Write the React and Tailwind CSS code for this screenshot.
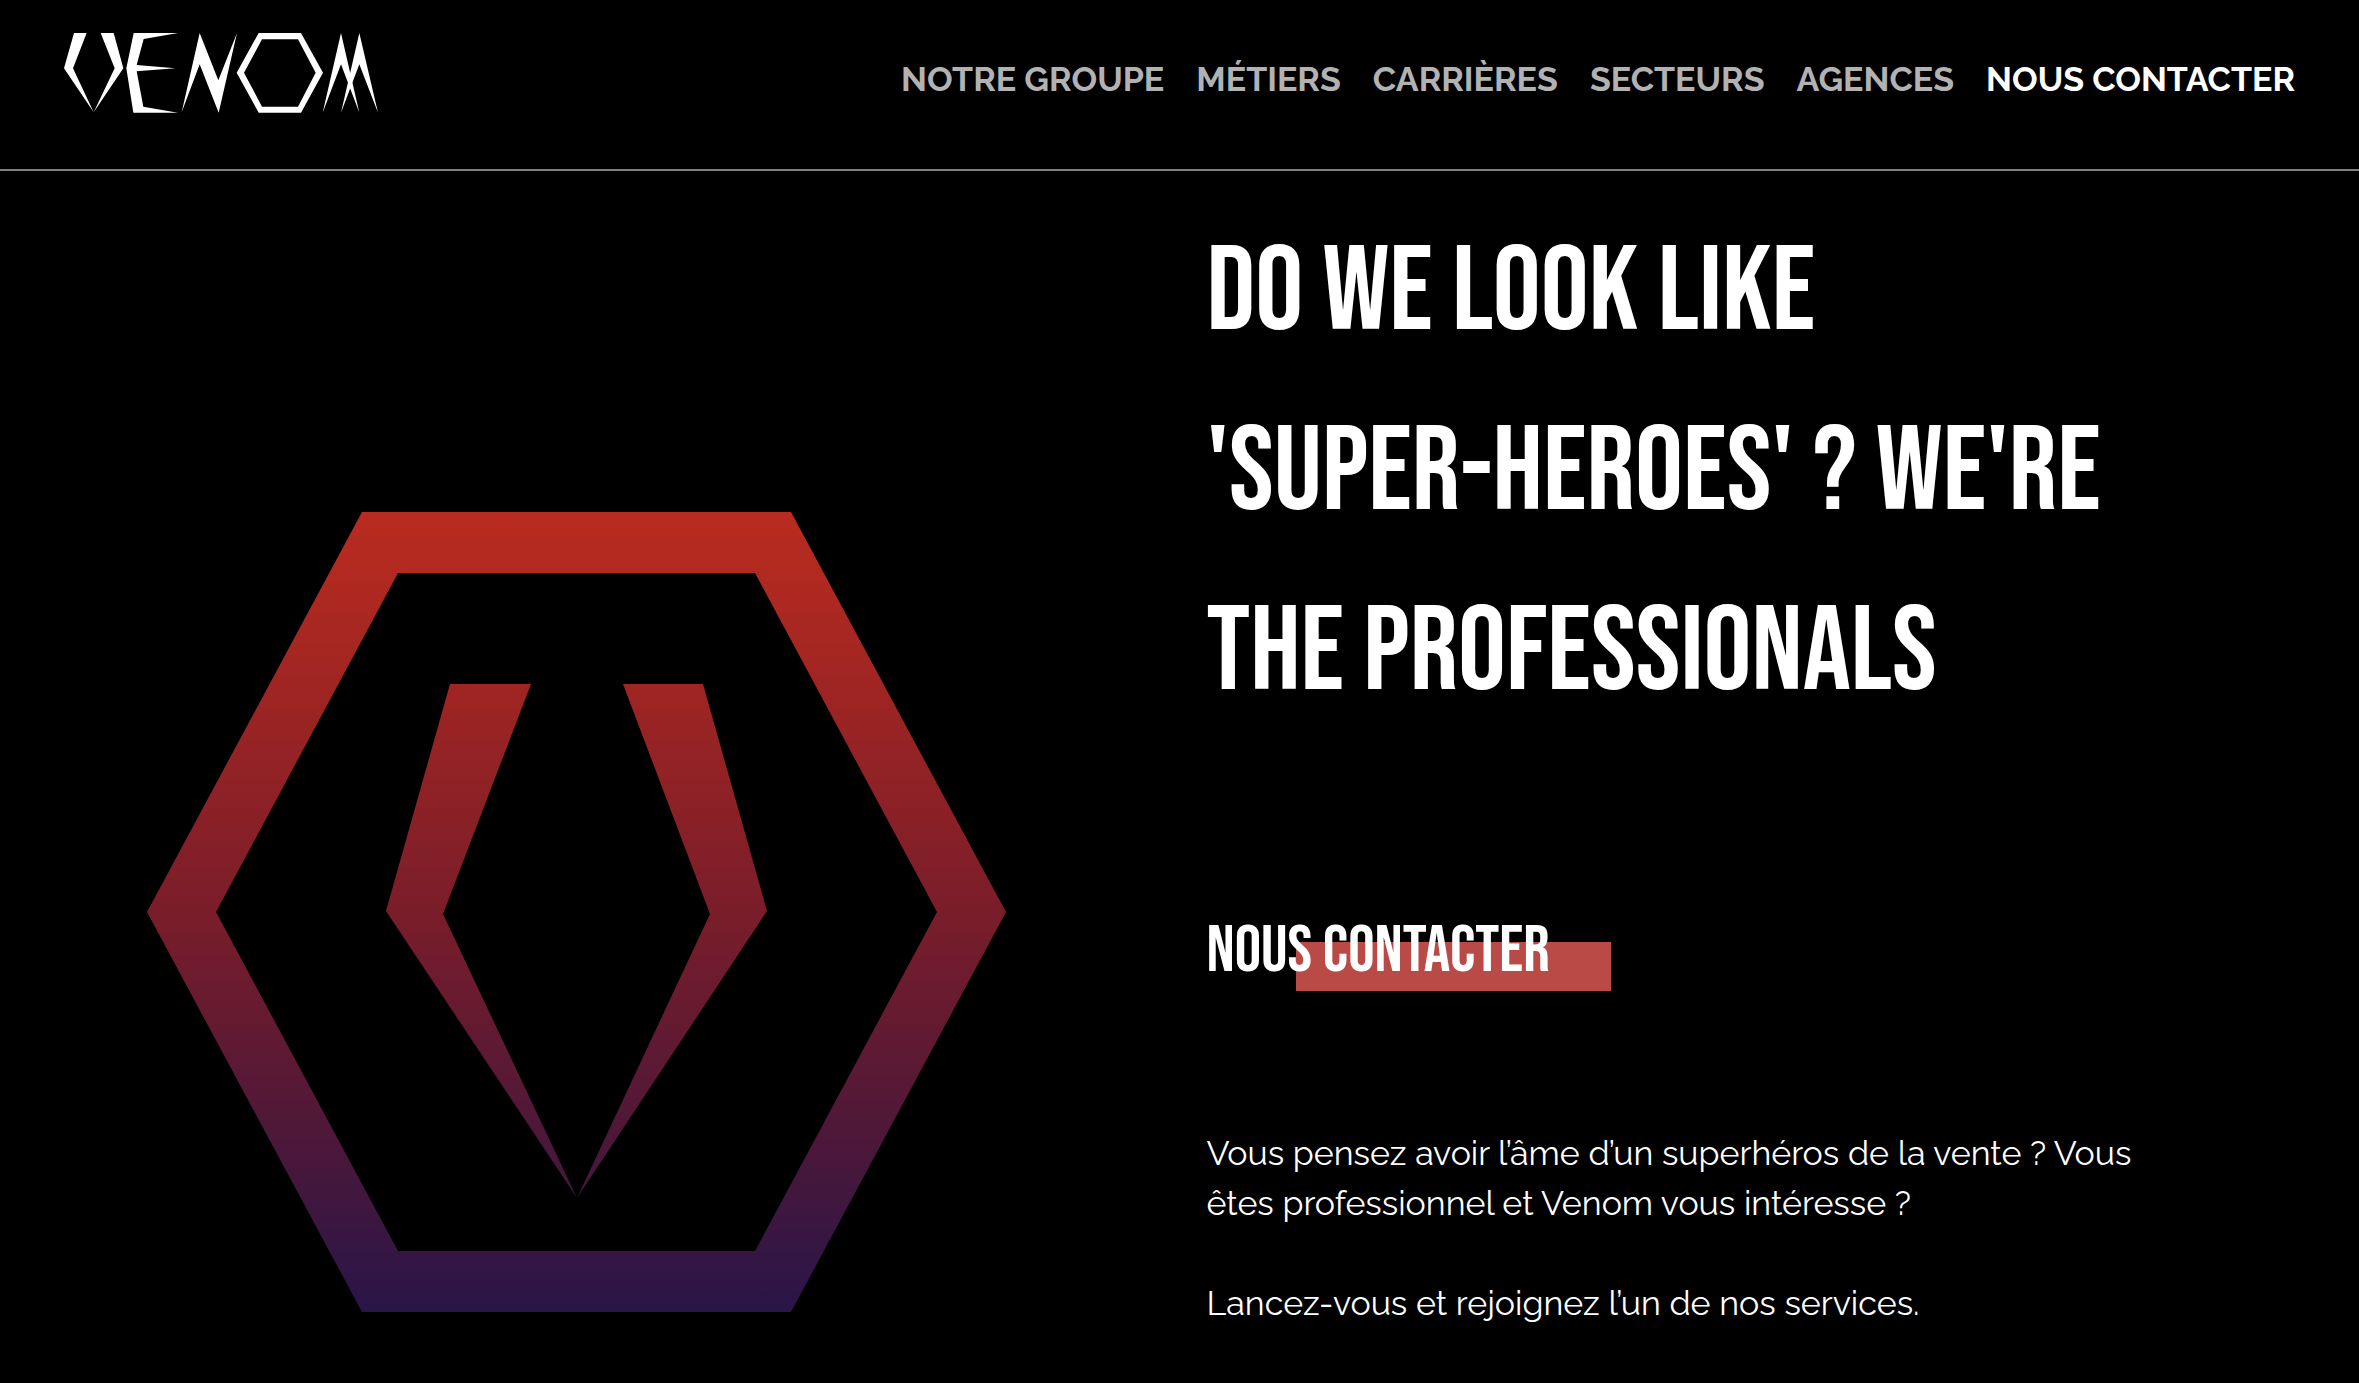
const LINKS = [
  { label: "NOTRE GROUPE", href: "#groupe" },
  { label: "MÉTIERS", href: "#metiers" },
  { label: "CARRIÈRES", href: "#carrieres" },
  { label: "SECTEURS", href: "#secteurs" },
  { label: "AGENCES", href: "#agences" },
  { label: "NOUS CONTACTER", href: "#contact", active: true },
];

function LogoVenom({ className = "" }) {
  return (
    <svg className={className} viewBox="0 0 942 240" fill="currentColor" role="img" aria-label="Venom">
      <polygon points="30,0 68,0 27,106 89,238 0,106" />
      <polygon points="110,0 149,0 178,106 89,238 152,106" />
      <polygon points="209,0 342,0 239,18 218,96 334,106 218,115 238,221 342,239 208,239 187,106" />
      <polygon points="353,238 407,0 463,142 519,0 464,239 407,94" />
      <path
        fillRule="evenodd"
        d="M584 0H711L777 119L711 239H584L518 119ZM594 19L540 119L594 221H702L755 119L702 19Z"
      />
      <polygon points="776,239 831,0 886,239 831,94" />
      <polygon points="831,239 886,0 942,239 886,94" />
    </svg>
  );
}

function Embleme({ className = "" }) {
  return (
    <svg className={className} viewBox="0 0 859 800" aria-hidden>
      <defs>
        <linearGradient id="embleme" gradientUnits="userSpaceOnUse" x1="0" y1="0" x2="0" y2="800">
          <stop offset="0" stopColor="#b92b20" />
          <stop offset="0.08" stopColor="#b12920" />
          <stop offset="0.25" stopColor="#9b2423" />
          <stop offset="0.5" stopColor="#7a1d2a" />
          <stop offset="0.75" stopColor="#521837" />
          <stop offset="1" stopColor="#291548" />
        </linearGradient>
      </defs>
      <g fill="url(#embleme)">
        <path
          fillRule="evenodd"
          d="M215 0H644L859 400L644 800H215L0 400ZM251 61L69 400L251 739H608L790 400L608 61Z"
        />
        <polygon points="303,172 384,172 296,402 430,686 239,399" />
        <polygon points="476,172 556,172 620,399 430,686 563,402" />
      </g>
    </svg>
  );
}

function Header() {
  return (
    <header className="flex h-[171px] items-start justify-between border-b-2 border-[#808080] px-16 pt-[33px]">
      <a href="#accueil">
        <LogoVenom className="h-20 w-auto" />
      </a>
      <nav className="mt-[22px] flex gap-8 font-['Raleway','Lato',sans-serif] text-[34px] leading-[48px] font-bold">
        {LINKS.map((link) => (
          <a
            key={link.label}
            href={link.href}
            aria-current={link.active ? "page" : undefined}
            className={link.active ? "text-white" : "text-[#b2b2b2] hover:text-white"}
          >
            {link.label}
          </a>
        ))}
      </nav>
    </header>
  );
}

export default function App() {
  return (
    <div className="min-h-screen bg-black text-white">
      <Header />

      <main className="grid grid-cols-2 gap-x-[54px]">
        <div className="flex justify-center pt-[341px]">
          <Embleme className="h-[800px] w-auto" />
        </div>

        <div className="pt-8 pr-[180px]">
          <h1 className="font-['Bebas_Neue','Open_Sans_Condensed',sans-serif] text-[120px] leading-[180px] font-normal">
            DO WE LOOK LIKE
            <br />
            'SUPER-HEROES' ? WE'RE
            <br />
            THE PROFESSIONALS
          </h1>

          <h2 className="relative isolate mt-[171px] w-fit font-['Bebas_Neue','Open_Sans_Condensed',sans-serif] text-[66px] leading-[76px] font-normal">
            <span className="absolute top-7 left-[89px] -z-10 h-[49px] w-[315px] bg-[#ba4a46]" />
            NOUS CONTACTER
          </h2>

          <div className="mt-[138px] space-y-[50px] font-['Raleway','Lato',sans-serif] text-[34px] leading-[50px] font-normal">
            <p>
              Vous pensez avoir l’âme d’un superhéros de la vente ? Vous êtes professionnel et Venom
              vous intéresse ?
            </p>
            <p>Lancez-vous et rejoignez l’un de nos services.</p>
          </div>
        </div>
      </main>
    </div>
  );
}
